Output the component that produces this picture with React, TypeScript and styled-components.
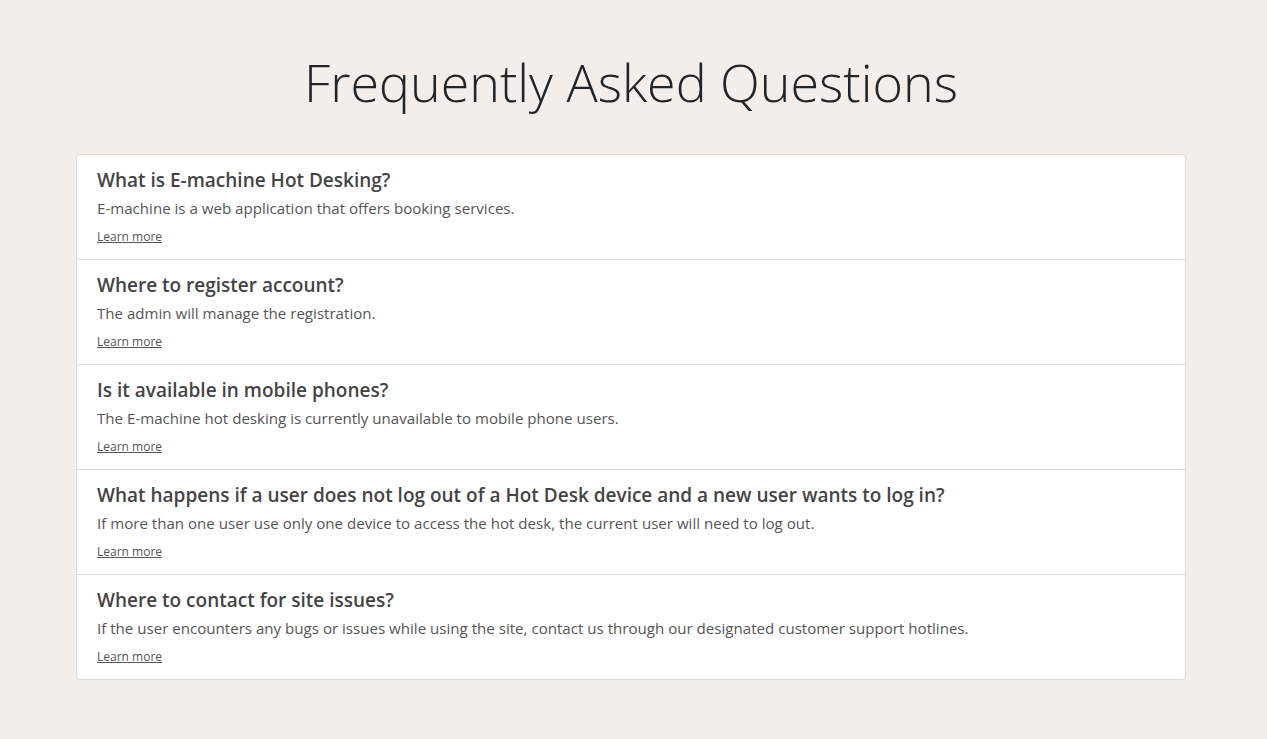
import React from "react";
import styled, { createGlobalStyle } from "styled-components";

const GlobalStyle = createGlobalStyle`
    html, body {
        margin: 0;
        padding: 0;
        background: #f3eeea;
    }
    body {
        font-family: "Open Sans", "Noto Sans", sans-serif;
        color: #444;
    }
`;

const Page = styled.div`
    display: flex;
    flex-direction: column;
    align-items: center;
    padding: 50px 5px 60px 0;
`;

const Title = styled.h1`
    margin: 0 0 40px;
    font-size: 52px;
    line-height: 64px;
    font-weight: 300;
    color: #212529;
`;

const Card = styled.ul`
    width: 1108px;
    margin: 0;
    padding: 0;
    list-style: none;
    background: #fff;
    border: 1px solid #dcdcdc;
    border-radius: 4px;
`;

const Item = styled.li`
    height: 92px;
    padding: 12px 20px 0;
    display: flex;
    flex-direction: column;

    & + & {
        border-top: 1px solid #dcdcdc;
    }
`;

const Question = styled.h5`
    margin: 0 0 2px;
    font-size: 19px;
    line-height: 26px;
    font-weight: 600;
    color: #444;
`;

const Answer = styled.p`
    margin: 0 0 6px;
    font-size: 15.1px;
    line-height: 26px;
    color: #555;
`;

const LearnMore = styled.a`
    font-size: 12px;
    line-height: 20px;
    color: #555;
    text-decoration: underline;
    align-self: flex-start;
`;

const faqs = [
    {
        q: "What is E-machine Hot Desking?",
        a: "E-machine is a web application that offers booking services.",
    },
    {
        q: "Where to register account?",
        a: "The admin will manage the registration.",
    },
    {
        q: "Is it available in mobile phones?",
        a: "The E-machine hot desking is currently unavailable to mobile phone users.",
    },
    {
        q: "What happens if a user does not log out of a Hot Desk device and a new user wants to log in?",
        a: "If more than one user use only one device to access the hot desk, the current user will need to log out.",
    },
    {
        q: "Where to contact for site issues?",
        a: "If the user encounters any bugs or issues while using the site, contact us through our designated customer support hotlines.",
    },
];

const App = () => {
    return (
        <>
            <GlobalStyle />
            <Page>
                <Title>Frequently Asked Questions</Title>
                <Card>
                    {faqs.map((f) => (
                        <Item key={f.q}>
                            <Question>{f.q}</Question>
                            <Answer>{f.a}</Answer>
                            <LearnMore href="#">Learn more</LearnMore>
                        </Item>
                    ))}
                </Card>
            </Page>
        </>
    );
};

export default App;
